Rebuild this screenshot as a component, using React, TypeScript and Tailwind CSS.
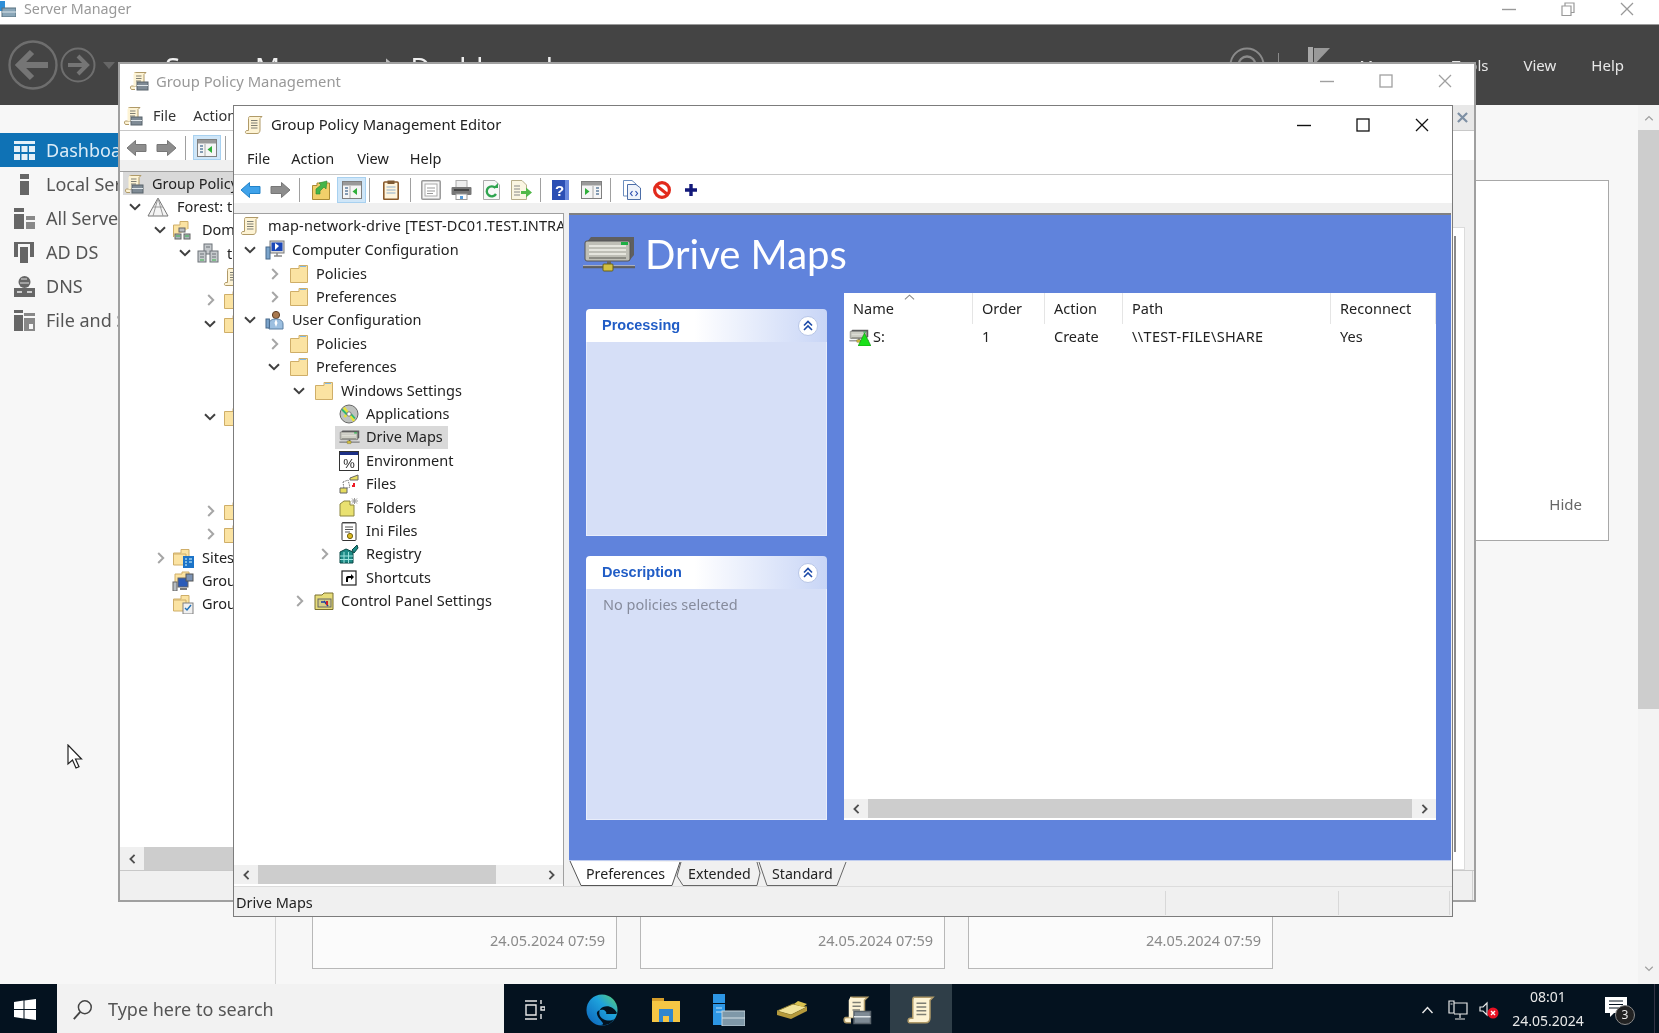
import type { ReactNode } from 'react';

const Chevron = ({ dir }: { dir: 'right' | 'down' }) =>
  dir === 'down' ? (
    <svg viewBox="0 0 12 8" className="h-[8px] w-[12px]"><path d="M1 1.2 6 6.2 11 1.2" fill="none" stroke="#404040" strokeWidth="2" /></svg>
  ) : (
    <svg viewBox="0 0 8 12" className="ml-[2px] h-[12px] w-[8px]"><path d="M1.2 1 6.2 6 1.2 11" fill="none" stroke="#a6a6a6" strokeWidth="2" /></svg>
  );

const Folder = () => (
  <svg viewBox="0 0 20 20" className="h-[20px] w-[20px]">
    <path d="M1.5 4.5H10V1.5H18.5V18.5H1.5Z" fill="#fbe3a2" stroke="#cfae68" />
    <path d="M11 2.5H17" stroke="#7fb8e6" strokeWidth="1" />
  </svg>
);

const Scroll = ({ className = 'h-[20px] w-[20px]' }: { className?: string }) => (
  <svg viewBox="0 0 20 20" className={`shrink-0 ${className}`}>
    <path d="M5.5 1.5H18L16 3.5V15C16 17 15 18.5 13 18.5H2.5C1 18.5 1 15.5 3 15.5H4.5V3.5C4.5 2.5 5 1.5 5.5 1.5Z" fill="#fdf3d4" stroke="#b09a68" />
    <path d="M7 5.5H13.5M7 8H13.5M7 10.5H13.5M7 13H13.5" stroke="#7f7f74" />
  </svg>
);

const ScrollTools = ({ className = 'h-[20px] w-[20px]' }: { className?: string }) => (
  <svg viewBox="0 0 20 20" className={`shrink-0 ${className}`}>
    <path d="M5.5 1.5H17L15 3.5V15H2.5C1 15 1 18.5 3 18.5H6" fill="#fdf3d4" stroke="#b09a68" />
    <path d="M5.5 1.5 4.5 3.5V15H14V3.5Z" fill="#fdf3d4" />
    <path d="M7 5H12.5M7 7.5H12.5M7 10H12" stroke="#7f7f74" />
    <rect x="8" y="11" width="11" height="8" fill="#7f8b95" stroke="#59636b" />
    <path d="M8 14.5H19" stroke="#dfe5e8" />
  </svg>
);

const Drive = ({ className }: { className: string }) => (
  <svg viewBox="0 0 54 36" className={`shrink-0 ${className}`}>
    <path d="M5 6 9 1H52V19L47 25H5Z" fill="#5f5f5f" />
    <rect x="3" y="5" width="45" height="20" rx="2" fill="#bfbfb6" stroke="#555" />
    <path d="M7 10H44M7 14H44M7 18H44" stroke="#f2f2ea" strokeWidth="1.6" />
    <path d="M7 22H44" stroke="#8c8c84" strokeWidth="2" />
    <path d="M39 6H46V9H39Z" fill="#1fae45" />
    <path d="M25 25H29V29H25Z" fill="#666" />
    <path d="M1 31H53" stroke="#5f5f5f" strokeWidth="2.6" />
    <path d="M1 29.6H53" stroke="#c4c4c4" strokeWidth="0.8" />
    <rect x="21" y="28" width="10" height="7" rx="1" fill="#d4c040" stroke="#66601e" />
  </svg>
);

const treeIcons: Record<string, ReactNode> = {
  app: (
    <svg viewBox="0 0 20 20" className="h-[20px] w-[20px]">
      <circle cx="10" cy="10" r="9" fill="#bfc2bf" stroke="#666" />
      <path d="M5 3.5 9 9 5.5 13M11 11 15 17" stroke="#e5e23a" strokeWidth="2.6" fill="none" />
      <path d="M3 5.5 8 10.5M12 10 16 14.5" stroke="#2eb872" strokeWidth="1.8" fill="none" />
      <circle cx="10" cy="10" r="2.2" fill="#fff" stroke="#777" />
    </svg>
  ),
  drive: <Drive className="h-[20px] w-[21px]" />,
  env: (
    <svg viewBox="0 0 20 20" className="h-[20px] w-[20px]">
      <rect x="0.5" y="0.5" width="19" height="19" fill="#fff" stroke="#333" />
      <rect x="1" y="1" width="18" height="3" fill="#1c2f86" />
      <text x="10" y="16.5" textAnchor="middle" fontSize="13" fontFamily="Liberation Sans, sans-serif" fill="#222">%</text>
    </svg>
  ),
  files: (
    <svg viewBox="0 0 20 20" className="h-[20px] w-[20px]">
      <path d="M11 4 19 1V6H11Z" fill="#e9df63" stroke="#666" />
      <path d="M4 8 9 6 11 13 5 15Z" fill="#fff" stroke="#777" strokeDasharray="1.5 1" />
      <path d="M1 14H8V19H1Z" fill="#e6dc5e" stroke="#666" />
      <path d="M14 10 16 10M13 12H16" stroke="#ee1c25" strokeWidth="2" />
    </svg>
  ),
  folders: (
    <svg viewBox="0 0 20 20" className="h-[20px] w-[20px]">
      <path d="M1 19V7L5 4H11V8H15V19Z" fill="#e9e170" stroke="#8c8640" />
      <path d="M15.5 1V7M12.5 4H19M13 1.5 18 6.5M18 1.5 13 6.5" stroke="#999" />
    </svg>
  ),
  ini: (
    <svg viewBox="0 0 20 20" className="h-[20px] w-[20px]">
      <rect x="3" y="1.5" width="14" height="18" rx="1" fill="#fff" stroke="#333" />
      <path d="M4 1V3M6 1V3M8 1V3M10 1V3M12 1V3M14 1V3M16 1V3" stroke="#555" />
      <path d="M6 6H14M6 8.5H14M6 11H11" stroke="#555" />
      <circle cx="11" cy="15" r="2.6" fill="#dbb920" stroke="#776510" />
    </svg>
  ),
  reg: (
    <svg viewBox="0 0 20 20" className="h-[20px] w-[20px]">
      <path d="M1 8 7 5 14 8V19H1Z" fill="#1d8b86" stroke="#084744" />
      <path d="M1 12H14M1 15.5H14M5 8V19M9.5 8V19" stroke="#9be3de" />
      <path d="M13 6 18 1 19 4 15 9Z" fill="#1d8b86" stroke="#084744" />
    </svg>
  ),
  shortcut: (
    <svg viewBox="0 0 20 20" className="h-[20px] w-[20px]">
      <rect x="3" y="3" width="14" height="14" fill="#fff" stroke="#222" strokeWidth="1.2" />
      <path d="M7 14V10C7 8.5 8 8 10 8H12V6L15 9 12 12V10H10C9.4 10 9 10.5 9 11V14Z" fill="#000" />
    </svg>
  ),
  cps: (
    <svg viewBox="0 0 20 20" className="h-[20px] w-[20px]">
      <path d="M1 18.5V4H8L10 2H19V18.5Z" fill="#e6dc7a" stroke="#7a7030" />
      <rect x="4" y="8" width="13" height="8" fill="#d6cf85" stroke="#666" />
      <path d="M7 11H10M10 10 14 15" stroke="#1d3c9f" strokeWidth="1.5" />
      <path d="M13 10V14" stroke="#d0202a" strokeWidth="2" />
    </svg>
  ),
  computer: (
    <svg viewBox="0 0 20 20" className="h-[20px] w-[20px]">
      <rect x="5" y="1" width="14" height="12" fill="#d8d8d8" stroke="#7a7a7a" />
      <path d="M6.5 2.5H17.5V11H6.5Z" fill="#1b47b8" />
      <path d="M10 3 14 6 10 10Z" fill="#fff" />
      <path d="M9 16H17M12 13V16" stroke="#888" strokeWidth="1.5" />
      <rect x="1" y="7" width="4" height="12" fill="#7ca5cc" stroke="#47698b" />
    </svg>
  ),
  user: (
    <svg viewBox="0 0 20 20" className="h-[20px] w-[20px]">
      <circle cx="11" cy="5" r="3.6" fill="#a9794f" stroke="#5e3e25" />
      <path d="M4 19V14C4 10 8 9 11 9S18 10 18 14V19Z" fill="#9cbfe0" stroke="#5b7fa3" />
      <path d="M11 9 9.5 13 11 17 12.5 13Z" fill="#fff" />
      <rect x="1" y="9" width="3.4" height="9" fill="#7ca5cc" stroke="#47698b" />
    </svg>
  ),
  folder: <Folder />,
  scroll: <Scroll />,
};

type Row = { label: string; chev?: 'right' | 'down'; icon: string; indent: string; selected?: boolean };

const editorRows: Row[] = [
  { label: 'Computer Configuration', chev: 'down', icon: 'computer', indent: 'pl-[10px]' },
  { label: 'Policies', chev: 'right', icon: 'folder', indent: 'pl-[34px]' },
  { label: 'Preferences', chev: 'right', icon: 'folder', indent: 'pl-[34px]' },
  { label: 'User Configuration', chev: 'down', icon: 'user', indent: 'pl-[10px]' },
  { label: 'Policies', chev: 'right', icon: 'folder', indent: 'pl-[34px]' },
  { label: 'Preferences', chev: 'down', icon: 'folder', indent: 'pl-[34px]' },
  { label: 'Windows Settings', chev: 'down', icon: 'folder', indent: 'pl-[59px]' },
  { label: 'Applications', icon: 'app', indent: 'pl-[84px]' },
  { label: 'Drive Maps', icon: 'drive', indent: 'pl-[84px]', selected: true },
  { label: 'Environment', icon: 'env', indent: 'pl-[84px]' },
  { label: 'Files', icon: 'files', indent: 'pl-[84px]' },
  { label: 'Folders', icon: 'folders', indent: 'pl-[84px]' },
  { label: 'Ini Files', icon: 'ini', indent: 'pl-[84px]' },
  { label: 'Registry', chev: 'right', icon: 'reg', indent: 'pl-[84px]' },
  { label: 'Shortcuts', icon: 'shortcut', indent: 'pl-[84px]' },
  { label: 'Control Panel Settings', chev: 'right', icon: 'cps', indent: 'pl-[59px]' },
];

const TreeRow = ({ row }: { row: Row }) => (
  <div className={`flex h-[23.4px] shrink-0 items-center whitespace-nowrap ${row.indent}`}>
    <span className="flex w-[12px] shrink-0 justify-center">{row.chev && <Chevron dir={row.chev} />}</span>
    <span className={`ml-[5px] flex h-[23px] items-center pl-[4px] pr-[5px] ${row.selected ? 'bg-[#d9d9d9]' : ''}`}>
      <span className="flex w-[20px] shrink-0 justify-center">{treeIcons[row.icon]}</span>
      <span className="ml-[7px]">{row.label}</span>
    </span>
  </div>
);

const oldRows: Row[] = [
  { label: 'Forest: test.intra', chev: 'down', icon: 'forest', indent: 'pl-[9px]' },
  { label: 'Domains', chev: 'down', icon: 'dom', indent: 'pl-[34px]' },
  { label: 'test.intra', chev: 'down', icon: 'servers', indent: 'pl-[59px]' },
  { label: '', icon: 'scroll', indent: 'pl-[84px]' },
  { label: '', chev: 'right', icon: 'folder', indent: 'pl-[84px]' },
  { label: '', chev: 'down', icon: 'folder', indent: 'pl-[84px]' },
  { label: '', icon: 'none', indent: 'pl-[84px]' },
  { label: '', icon: 'none', indent: 'pl-[84px]' },
  { label: '', icon: 'none', indent: 'pl-[84px]' },
  { label: '', chev: 'down', icon: 'folder', indent: 'pl-[84px]' },
  { label: '', icon: 'none', indent: 'pl-[84px]' },
  { label: '', icon: 'none', indent: 'pl-[84px]' },
  { label: '', icon: 'none', indent: 'pl-[84px]' },
  { label: '', chev: 'right', icon: 'folder', indent: 'pl-[84px]' },
  { label: '', chev: 'right', icon: 'folder', indent: 'pl-[84px]' },
  { label: 'Sites', chev: 'right', icon: 'sites', indent: 'pl-[34px]' },
  { label: 'Group Policy Modeling', icon: 'model', indent: 'pl-[34px]' },
  { label: 'Group Policy Results', icon: 'results', indent: 'pl-[34px]' },
];

const oldIcons: Record<string, ReactNode> = {
  ...treeIcons,
  none: null,
  forest: (
    <svg viewBox="0 0 22 20" className="h-[20px] w-[22px]">
      <path d="M11 1 21 19H1Z" fill="#f4f4f4" stroke="#777" />
      <path d="M6 10H16M11 1 6 19M11 1 16 19" fill="none" stroke="#999" />
    </svg>
  ),
  dom: (
    <svg viewBox="0 0 22 20" className="h-[20px] w-[22px]">
      <path d="M1.5 17V5H8V1.5H16V9" fill="#fbe3a2" stroke="#cfae68" />
      <rect x="7" y="8" width="6" height="4" fill="#b8bcc0" stroke="#666" />
      <rect x="3" y="14" width="6" height="5" fill="#aab4ba" stroke="#666" />
      <rect x="12" y="14" width="6" height="5" fill="#aab4ba" stroke="#666" />
      <path d="M4 16H8M13 16H17" stroke="#39b54a" />
    </svg>
  ),
  servers: (
    <svg viewBox="0 0 22 20" className="h-[20px] w-[22px]">
      <rect x="7" y="1" width="8" height="10" fill="#c5c9cc" stroke="#6c7378" />
      <rect x="1" y="8" width="8" height="11" fill="#c5c9cc" stroke="#6c7378" />
      <rect x="13" y="8" width="8" height="11" fill="#c5c9cc" stroke="#6c7378" />
      <path d="M3 11H7M3 14H7M15 11H19M15 14H19M9 4H13" stroke="#6c7378" />
      <path d="M3 17H7M15 17H19" stroke="#39b54a" />
    </svg>
  ),
  sites: (
    <svg viewBox="0 0 22 20" className="h-[20px] w-[22px]">
      <path d="M1.5 17V5H9V1.5H17V9" fill="#fbe3a2" stroke="#cfae68" />
      <path d="M1.5 17V6H14V17Z" fill="#fbe3a2" stroke="#cfae68" />
      <rect x="11" y="8" width="11" height="12" fill="#1c73c8" />
      <path d="M13 11H15M17 11H20M13 14H15M17 14H20M13 17H15" stroke="#dff" />
    </svg>
  ),
  model: (
    <svg viewBox="0 0 22 20" className="h-[20px] w-[22px]">
      <path d="M3 13V3H10V1H17V6" fill="#fbe3a2" stroke="#cfae68" />
      <rect x="6" y="7" width="10" height="9" fill="#2b5bb8" stroke="#666" />
      <rect x="14" y="3" width="7" height="7" fill="#7c93b4" stroke="#555" />
      <rect x="1" y="11" width="4" height="9" fill="#b7bdc2" stroke="#666" />
      <path d="M8 18H15" stroke="#777" strokeWidth="2" />
    </svg>
  ),
  results: (
    <svg viewBox="0 0 22 20" className="h-[20px] w-[22px]">
      <path d="M1.5 17V5H9V1.5H17V9" fill="#fbe3a2" stroke="#cfae68" />
      <path d="M1.5 17V6H14V17Z" fill="#fbe3a2" stroke="#cfae68" />
      <rect x="11" y="9" width="10" height="11" fill="#f0f0f0" stroke="#808080" />
      <path d="M13 14 15 16 19 11" fill="none" stroke="#1d6fb8" strokeWidth="1.4" />
    </svg>
  ),
};

const OldTreeRow = ({ row }: { row: Row }) => (
  <div className={`flex h-[23.4px] shrink-0 items-center whitespace-nowrap ${row.indent}`}>
    <span className="flex w-[12px] shrink-0 justify-center">{row.chev && <Chevron dir={row.chev} />}</span>
    <span className="ml-[6px] flex w-[22px] shrink-0 justify-center">{oldIcons[row.icon]}</span>
    <span className="ml-[8px]">{row.label}</span>
  </div>
);

const Sep = ({ className }: { className: string }) => <span className={`h-[24px] w-px shrink-0 bg-[#a0a0a0] ${className}`} />;

const ArrowL = ({ color, edge, className }: { color: string; edge: string; className: string }) => (
  <svg viewBox="0 0 21 18" className={`h-[18px] w-[21px] shrink-0 ${className}`}>
    <path d="M1 9 9.5 1.5V5.5H20V12.5H9.5V16.5Z" fill={color} stroke={edge} strokeLinejoin="round" />
  </svg>
);

const ArrowR = ({ color, edge, className }: { color: string; edge: string; className: string }) => (
  <svg viewBox="0 0 21 18" className={`h-[18px] w-[21px] shrink-0 ${className}`}>
    <path d="M20 9 11.5 1.5V5.5H1V12.5H11.5V16.5Z" fill={color} stroke={edge} strokeLinejoin="round" />
  </svg>
);

const PaneIcon = () => (
  <svg viewBox="0 0 20 18" className="h-[18px] w-[20px]">
    <rect x="0.5" y="0.5" width="19" height="17" fill="#f5f5f5" stroke="#7f7f7f" />
    <rect x="1" y="1" width="18" height="3.5" fill="#9a9a9a" />
    <path d="M3 7H6M3 10H6M3 13H6" stroke="#5f7f9f" strokeWidth="1.5" />
    <path d="M8 5V17" stroke="#aaa" />
    <path d="M15 7V14L10.5 10.5Z" fill="#2fae3a" />
  </svg>
);

const ScrollBar = ({ thumb, className }: { thumb: string; className: string }) => (
  <div className={`flex shrink-0 items-center bg-[#f0f0f0] ${className}`}>
    <span className="flex w-[24px] shrink-0 justify-center">
      <svg viewBox="0 0 8 12" className="h-[10px] w-[7px]"><path d="M6.5 1 1.5 6 6.5 11" fill="none" stroke="#505050" strokeWidth="2.2" /></svg>
    </span>
    <span className={`h-full bg-[#cdcdcd] ${thumb}`} />
    <span className="ml-auto flex w-[24px] shrink-0 justify-center">
      <svg viewBox="0 0 8 12" className="h-[10px] w-[7px]"><path d="M1.5 1 6.5 6 1.5 11" fill="none" stroke="#505050" strokeWidth="2.2" /></svg>
    </span>
  </div>
);

const WinControls = ({ color, restore }: { color: string; restore?: boolean }) => (
  <>
    <svg viewBox="0 0 14 14" className="h-[14px] w-[14px]"><path d="M0 7.5H14" stroke={color} strokeWidth="1.4" /></svg>
    <svg viewBox="0 0 14 14" className="ml-[45px] h-[14px] w-[14px]">
      {restore ? (
        <path d="M1 4H10V13.5H1ZM4 4V1H13V10.5H10" fill="none" stroke={color} strokeWidth="1.2" />
      ) : (
        <rect x="1" y="1" width="12" height="12" fill="none" stroke={color} strokeWidth="1.3" />
      )}
    </svg>
    <svg viewBox="0 0 14 14" className="ml-[45px] h-[14px] w-[14px]"><path d="M1 1 13 13M13 1 1 13" stroke={color} strokeWidth="1.3" /></svg>
  </>
);

const DateCard = () => (
  <div className="flex w-[305px] items-end justify-end border-x border-b border-[#b8b8b8] bg-[#fbfbfb] pb-[16px] pr-[11px] text-[14.5px] text-[#8a8a8a]">
    24.05.2024 07:59
  </div>
);

const side: { label: string; icon: ReactNode; active?: boolean }[] = [
  {
    label: 'Dashboard',
    active: true,
    icon: (
      <svg viewBox="0 0 21 19" className="h-[19px] w-[21px]" fill="#e4f0f8">
        <rect width="21" height="3" /><rect y="5" width="6" height="6" /><rect x="7.5" y="5" width="6" height="6" /><rect x="15" y="5" width="6" height="6" /><rect y="13" width="6" height="6" /><rect x="7.5" y="13" width="6" height="6" /><rect x="15" y="13" width="6" height="6" />
      </svg>
    ),
  },
  {
    label: 'Local Server',
    icon: <svg viewBox="0 0 21 21" className="h-[21px] w-[21px]"><rect x="6" y="0" width="9" height="5" fill="#666" /><rect x="6" y="7" width="9" height="14" fill="#666" /></svg>,
  },
  {
    label: 'All Servers',
    icon: <svg viewBox="0 0 21 21" className="h-[21px] w-[21px]"><rect x="0" y="0" width="10" height="4" fill="#666" /><rect x="0" y="6" width="10" height="15" fill="#666" /><rect x="12" y="8" width="9" height="4" fill="#888" /><rect x="12" y="14" width="9" height="7" fill="#888" /></svg>,
  },
  {
    label: 'AD DS',
    icon: <svg viewBox="0 0 21 21" className="h-[21px] w-[21px]" fill="#666"><rect x="0" y="1" width="4" height="14" /><rect x="0" y="0" width="20" height="2" /><rect x="16" y="1" width="4" height="14" /><rect x="6" y="5" width="8" height="16" /></svg>,
  },
  {
    label: 'DNS',
    icon: <svg viewBox="0 0 21 21" className="h-[21px] w-[21px]"><circle cx="10.5" cy="6" r="6" fill="#666" /><path d="M7 3H13M6 7H15" stroke="#ddd" /><rect x="0" y="12" width="21" height="9" fill="#666" /><path d="M3 16H8M13 16H18" stroke="#eee" strokeWidth="1.5" /></svg>,
  },
  {
    label: 'File and Storage Services',
    icon: <svg viewBox="0 0 21 21" className="h-[21px] w-[21px]"><rect x="0" y="0" width="9" height="3" fill="#666" /><rect x="0" y="5" width="9" height="16" fill="#666" /><rect x="10" y="3" width="11" height="3" fill="#888" /><path d="M10 8H21V21H10Z" fill="#888" /><path d="M15 14H19V19H15Z" fill="#f7f7f7" /></svg>,
  },
];

const menuFont = "font-['Noto_Sans',sans-serif]";

export default function App() {
  return (
    <div className={`relative flex h-[1033px] w-[1659px] flex-col overflow-hidden bg-[#f7f7f7] text-[14.5px] text-[#222] blur-[0.4px] ${menuFont}`}>
      {/* server manager behind everything */}
      <div className="flex h-[25px] shrink-0 items-center border-b border-[#9a9a9a] bg-white pb-[6px] text-[#999]">
        <svg viewBox="0 0 16 16" className="h-[16px] w-[16px]">
          <rect x="0" y="0" width="5" height="10" fill="#2f8fd8" />
          <rect x="2" y="7" width="14" height="9" fill="#8aa6b8" stroke="#56707f" />
          <path d="M2 11H16" stroke="#dbe6ec" />
        </svg>
        <span className="ml-[8px] text-[14.3px]">Server Manager</span>
        <span className="ml-auto mr-[25px] flex items-center"><WinControls color="#999" restore /></span>
      </div>
      <div className="flex h-[80px] shrink-0 items-center bg-[#444] pl-[8px] pr-[35px] text-[#e8e8e8]">
        <svg viewBox="0 0 50 50" className="h-[50px] w-[50px]">
          <circle cx="25" cy="25" r="23.5" fill="none" stroke="#6e6e6e" strokeWidth="2.4" />
          <path d="M11 25H40M24 12 11 25 24 38" fill="none" stroke="#757575" strokeWidth="6" />
        </svg>
        <svg viewBox="0 0 36 36" className="ml-[2px] h-[36px] w-[36px]">
          <circle cx="18" cy="18" r="16.5" fill="none" stroke="#6e6e6e" strokeWidth="2" />
          <path d="M8 18H27M18 9 27 18 18 27" fill="none" stroke="#757575" strokeWidth="4" />
        </svg>
        <span className="ml-[7px] h-0 w-0 border-x-[6px] border-t-[7px] border-x-transparent border-t-[#666]" />
        <span className="ml-[50px] mt-[6px] whitespace-nowrap text-[27.5px] text-[#f0f0f0]">Server Manager</span>
        <span className="ml-[14px] mt-[-4px] h-[10px] w-[6px] bg-[#bbb] [clip-path:polygon(0_0,100%_50%,0_100%)]" />
        <span className="ml-[19px] mt-[6px] whitespace-nowrap text-[27.5px] text-[#f0f0f0]">Dashboard</span>
        <span className="ml-auto flex items-center gap-[35px] text-[15px]">
          <svg viewBox="0 0 36 36" className="h-[36px] w-[36px]">
            <circle cx="18" cy="18" r="16.5" fill="none" stroke="#8a8a8a" strokeWidth="2" />
            <circle cx="18" cy="18" r="8.5" fill="none" stroke="#8a8a8a" strokeWidth="2.4" />
          </svg>
          <span className="-ml-[22px] h-[24px] w-px bg-[#8a8a8a]" />
          <svg viewBox="0 0 22 36" className="-ml-[6px] -mr-[5px] h-[36px] w-[22px]">
            <rect x="0" y="0" width="5" height="36" fill="#a8a8a8" />
            <path d="M6 1H22L6 18Z" fill="#999" />
          </svg>
          <span>Manage</span>
          <span>Tools</span>
          <span>View</span>
          <span>Help</span>
        </span>
      </div>

      <div className="flex min-h-0 flex-1">
        <div className="w-[276px] shrink-0 border-r border-[#d4d4d4] pt-[28px] text-[18px] text-[#555]">
          {side.map((s) => (
            <div key={s.label} className={`flex h-[34px] items-center whitespace-nowrap pl-[14px] ${s.active ? 'bg-[#0f72b5] text-[#dcecf7]' : ''}`}>
              <span className="w-[32px] shrink-0">{s.icon}</span>
              {s.label}
            </div>
          ))}
        </div>
        <div className="flex min-w-0 flex-1 flex-col pb-[15px] pl-[36px] pr-[29px] pt-[75px]">
          <div className="flex h-[361px] items-end justify-end border border-[#a8a8a8] bg-white pb-[25px] pr-[26px] text-[15px] text-[#666]">Hide</div>
          <div className="mt-auto flex h-[120px] gap-[23px]">
            <DateCard />
            <DateCard />
            <DateCard />
          </div>
        </div>
        <div className="flex w-[21px] shrink-0 flex-col items-center bg-[#f3f3f3]">
          <span className="flex h-[25px] items-center">
            <svg viewBox="0 0 12 8" className="h-[6px] w-[10px]"><path d="M1 7 6 2 11 7" fill="none" stroke="#a0a0a0" strokeWidth="1.6" /></svg>
          </span>
          <span className="h-[579px] w-full bg-[#cdcdcd]" />
          <span className="mt-auto flex h-[22px] items-center pb-[8px]">
            <svg viewBox="0 0 12 8" className="h-[6px] w-[10px]"><path d="M1 1 6 6 11 1" fill="none" stroke="#a0a0a0" strokeWidth="1.6" /></svg>
          </span>
        </div>
      </div>

      {/* taskbar */}
      <div className="flex h-[49px] shrink-0 items-center bg-[#04121f] text-[#e8e8e8] [&>svg]:mt-[2px]">
        <div className="flex h-full w-[57px] shrink-0 items-center pl-[14px] pt-[2px]">
          <svg viewBox="0 0 22 21" className="h-[21px] w-[22px]" fill="#fff">
            <path d="M0 3 9.5 1.6V10H0ZM10.5 1.5 22 0V10H10.5ZM0 11H9.5V19.4L0 18ZM10.5 11H22V21L10.5 19.5Z" />
          </svg>
        </div>
        <div className="flex h-full w-[447px] shrink-0 items-center bg-[#f2f2f2] pl-[15px] pt-[2px] text-[18px] text-[#555]">
          <svg viewBox="0 0 24 24" className="h-[22px] w-[22px]"><circle cx="14" cy="9" r="7" fill="none" stroke="#444" strokeWidth="1.6" /><path d="M9 14 2 22" stroke="#444" strokeWidth="2" /></svg>
          <span className="ml-[14px]">Type here to search</span>
        </div>
        <svg viewBox="0 0 21 22" className="ml-[20px] h-[22px] w-[21px]" fill="none" stroke="#e8e8e8" strokeWidth="1.4">
          <path d="M1 2H13M1 20H13M2 6H12V16H2ZM17 1V5M17 8H21V11H17ZM17 15V20" />
        </svg>
        <svg viewBox="0 0 32 32" className="ml-[41px] h-[32px] w-[32px]">
          <defs>
            <linearGradient id="edge" x1="0" y1="1" x2="1" y2="0"><stop offset="0" stopColor="#0b60b8" /><stop offset="0.6" stopColor="#1ea2dc" /><stop offset="1" stopColor="#5fd06a" /></linearGradient>
          </defs>
          <circle cx="16" cy="16" r="15.5" fill="url(#edge)" />
          <path d="M31 19C28 13 22 11 17 13 12 15 12 22 17 25 21 27 25 27 28 25 25 30 20 32 15 31 21 30 12 26 11 20 10 17 14 15 18 16 20 17 21 19 20 20H30Z" fill="#04121f" />
        </svg>
        <svg viewBox="0 0 28 24" className="ml-[34px] h-[24px] w-[28px]">
          <rect y="0" width="12" height="4" fill="#d59d2a" />
          <rect y="3" width="28" height="21" fill="#f5c644" />
          <rect x="7" y="11" width="14" height="13" fill="#2f86d0" />
          <rect x="11" y="18" width="6" height="6" fill="#f5c644" />
        </svg>
        <svg viewBox="0 0 32 32" className="ml-[33px] h-[32px] w-[32px]">
          <rect x="0" y="0" width="12" height="9" fill="#2d96e4" />
          <rect x="0" y="10" width="12" height="21" fill="#2d96e4" />
          <path d="M3 14H9M3 18H9" stroke="#bfe1fa" />
          <rect x="9" y="17" width="23" height="15" fill="#7f98a8" stroke="#c4d2da" />
          <path d="M9 24H32" stroke="#d5e0e6" />
        </svg>
        <svg viewBox="0 0 32 20" className="ml-[31px] h-[20px] w-[32px]">
          <path d="M1 11 17 4 31 7 15 15Z" fill="#f1e39a" stroke="#8a7a30" />
          <path d="M1 11V15L15 19 31 11V7L15 15Z" fill="#b69a3c" />
          <path d="M22 1 31 4 27 7 18 4Z" fill="#d9c14f" />
        </svg>
        <ScrollTools className="ml-[34px] mt-[2px] h-[30px] w-[30px]" />
        <div className="ml-[18px] flex h-full w-[62px] shrink-0 items-center justify-center bg-[#2f3e48] pt-[2px]">
          <Scroll className="h-[30px] w-[30px]" />
        </div>
        <svg viewBox="0 0 12 8" className="ml-[469px] h-[8px] w-[13px]"><path d="M1 7 6 1.5 11 7" fill="none" stroke="#e8e8e8" strokeWidth="1.4" /></svg>
        <svg viewBox="0 0 20 20" className="ml-[14px] h-[20px] w-[20px]" fill="none" stroke="#e8e8e8" strokeWidth="1.2">
          <path d="M1 1H6V13H1ZM6 3H19V14H6M12 14V18M7 19H17M2.5 4H4.5" />
        </svg>
        <svg viewBox="0 0 20 20" className="ml-[11px] h-[20px] w-[20px]">
          <path d="M1 7H4L8 3V15L4 11H1Z" fill="none" stroke="#e8e8e8" strokeWidth="1.2" />
          <circle cx="14" cy="13" r="5.5" fill="#e81123" />
          <path d="M12 11 16 15M16 11 12 15" stroke="#fff" strokeWidth="1.4" />
        </svg>
        <div className="ml-[14px] flex w-[70px] shrink-0 flex-col items-center gap-[4px] text-[14px] leading-[20px]">
          <span>08:01</span>
          <span>24.05.2024</span>
        </div>
        <div className="relative ml-[22px] mt-[2px] h-[30px] w-[30px] shrink-0">
          <svg viewBox="0 0 22 22" className="h-[26px] w-[22px]" fill="#fff">
            <path d="M0 0H22V16H9L5 20V16H0Z" />
            <path d="M4 4H18M4 7.5H18M4 11H18" stroke="#04121f" />
          </svg>
          <span className="absolute bottom-0 right-0 flex h-[20px] w-[20px] items-center justify-center rounded-full border border-[#888] bg-[#222] text-[12px]">3</span>
        </div>
        <span className="ml-auto mr-[4px] h-full w-px bg-[#334]" />
      </div>

      {/* mouse cursor */}
      <svg viewBox="0 0 16 26" className="absolute left-[67px] top-[744px] h-[26px] w-[16px]">
        <path d="M1 1V20L5.5 16 9 24 12 22.7 8.5 15H14.5Z" fill="#fff" stroke="#222" strokeWidth="1.2" />
      </svg>

      {/* group policy management */}
      <div className="absolute left-[118px] top-[62px] flex h-[840px] w-[1358px] flex-col border-2 border-[#a0a0a0] bg-white">
        <div className="flex h-[41px] shrink-0 items-center pb-[7px] pl-[9px] pr-[22px] text-[#999]">
          <ScrollTools />
          <span className="ml-[7px] text-[14.8px]">Group Policy Management</span>
          <span className="ml-auto flex items-center"><WinControls color="#a0a0a0" /></span>
        </div>
        <div className="flex h-[25px] shrink-0 items-center pl-[3px] text-[#333]">
          <span className="flex h-full items-center pb-[4px]"><ScrollTools /></span>
          <span className="ml-[10px] pb-[4px]">File</span>
          <span className="ml-[17px] pb-[4px]">Action</span>
          <span className="ml-auto flex h-full w-[24px] items-center justify-center bg-[#e8e8e8]">
            <svg viewBox="0 0 12 12" className="h-[11px] w-[11px]"><path d="M1 1 11 11M11 1 1 11" stroke="#7d8fa3" strokeWidth="2.4" /></svg>
          </span>
        </div>
        <div className="flex h-[30px] shrink-0 items-center border-t border-[#c8c8c8] pl-[6px] pt-[4px]">
          <ArrowL color="#8d8d8d" edge="#777" className="" />
          <ArrowR color="#8d8d8d" edge="#777" className="ml-[9px]" />
          <Sep className="ml-[8px]" />
          <span className="ml-[7px] flex h-[25px] w-[28px] items-center justify-center border border-[#a8d1f0] bg-[#cfe6f8]"><PaneIcon /></span>
          <Sep className="ml-[4px]" />
        </div>
        <div className="h-[11px] shrink-0 bg-[#f0f0f0]" />
        <div className="flex min-h-0 flex-1 bg-[#f0f0f0]">
          <div className="flex w-[800px] shrink-0 flex-col border-t border-[#a0a0a0] bg-white">
            <div className="ml-[3px] flex h-[23px] shrink-0 items-center bg-[#d9d9d9] pl-[1px]">
              <ScrollTools />
              <span className="ml-[8px]">Group Policy Management</span>
            </div>
            {oldRows.map((r, i) => <OldTreeRow key={i} row={r} />)}
            <ScrollBar thumb="ml-0 w-[300px]" className="mt-auto h-[23px] w-full" />
          </div>
          <div className="flex min-w-0 flex-1 justify-end pt-[56px] pr-[9px]">
            <div className="flex w-[200px] justify-end border border-[#dcdcdc] bg-white pb-[17px] pr-[8px] pt-[8px]">
              <div className="w-[100px] border-x-2 border-double border-[#8a8a8a]" />
            </div>
          </div>
        </div>
        <div className="flex h-[30px] shrink-0 justify-end border-t border-[#c8c8c8] bg-[#f0f0f0] pr-[1px]">
          <span className="h-full w-px bg-[#d0d0d0]" />
        </div>
      </div>

      {/* group policy management editor */}
      <div className="absolute left-[233px] top-[105px] flex h-[812px] w-[1220px] flex-col border border-[#7c7c7c] bg-white">
        <div className="flex h-[39px] shrink-0 items-center pb-[2px] pl-[10px] pr-[23px]">
          <Scroll />
          <span className="ml-[7px] text-[14.8px]">Group Policy Management Editor</span>
          <span className="ml-auto flex items-center"><WinControls color="#111" /></span>
        </div>
        <div className="flex h-[29px] shrink-0 items-center pb-[2px] pl-[13px]">
          <span>File</span>
          <span className="ml-[21px]">Action</span>
          <span className="ml-[23px]">View</span>
          <span className="ml-[21px]">Help</span>
        </div>
        <div className="flex h-[29px] shrink-0 items-center border-t border-[#c8c8c8] pl-[6px] pt-[2px]">
          <ArrowL color="#3fa2ea" edge="#2283c9" className="" />
          <ArrowR color="#8d8d8d" edge="#777" className="ml-[9px]" />
          <Sep className="ml-[8px]" />
          <svg viewBox="0 0 18 20" className="ml-[12px] h-[20px] w-[18px] shrink-0">
            <path d="M0.5 19.5V5.5H5V3H17.5V19.5Z" fill="#f1cf6a" stroke="#a98a36" />
            <path d="M4 14 4 9 9 5 7 3 15 1 14 9 12 7 8 11 8 14Z" fill="#45b54a" stroke="#2a8a2f" strokeWidth="0.6" />
          </svg>
          <span className="ml-[7px] flex h-[26px] w-[29px] shrink-0 items-center justify-center border border-[#a8d1f0] bg-[#cfe6f8]"><PaneIcon /></span>
          <Sep className="ml-[3px]" />
          <svg viewBox="0 0 16 20" className="ml-[13px] h-[20px] w-[16px] shrink-0">
            <rect x="0.8" y="2" width="14.4" height="17.4" rx="1" fill="#fff4dc" stroke="#8a5a2b" strokeWidth="1.6" />
            <rect x="4.5" y="0.5" width="7" height="3.5" fill="#7f5a33" />
            <path d="M3.5 7H12.5M3.5 10H12.5M3.5 13H12.5" stroke="#8daecc" />
          </svg>
          <Sep className="ml-[11px]" />
          <svg viewBox="0 0 20 20" className="ml-[10px] h-[20px] w-[20px] shrink-0">
            <rect x="0.8" y="0.8" width="18.4" height="18.4" rx="1" fill="#f6f6f6" stroke="#999" strokeWidth="1.5" />
            <rect x="4" y="4" width="12" height="12" fill="#fff" stroke="#aaa" />
            <path d="M6 8H14M6 11H14M6 13.5H12" stroke="#999" />
          </svg>
          <svg viewBox="0 0 21 20" className="ml-[10px] h-[20px] w-[21px] shrink-0">
            <rect x="5" y="0.5" width="11" height="8" fill="#eee" stroke="#aaa" />
            <rect x="0.5" y="7" width="20" height="8" rx="1" fill="#777" />
            <path d="M3 10H18" stroke="#333" strokeWidth="1.5" />
            <rect x="5" y="14" width="11" height="5.5" fill="#fff" stroke="#999" />
            <path d="M9 16H12V19H9Z" fill="#5b9fdc" />
          </svg>
          <svg viewBox="0 0 17 20" className="ml-[11px] h-[20px] w-[17px] shrink-0">
            <path d="M0.5 0.5H12L16.5 5V19.5H0.5Z" fill="#f8f8f8" stroke="#aaa" />
            <path d="M12.5 8A5 5 0 1 0 13 14" fill="none" stroke="#2ea44f" strokeWidth="2.4" />
            <path d="M10 8H15V3Z" fill="#2ea44f" />
          </svg>
          <svg viewBox="0 0 21 20" className="ml-[11px] h-[20px] w-[21px] shrink-0">
            <path d="M0.5 0.5H11L15.5 5V19.5H0.5Z" fill="#fbf6e2" stroke="#b7ad8a" />
            <path d="M3 6H9M3 9H9M3 12H9M3 15H9" stroke="#888" />
            <path d="M10 11H15V7.5L21 12.5 15 17.5V14H10Z" fill="#52b848" />
          </svg>
          <Sep className="ml-[8px]" />
          <svg viewBox="0 0 17 20" className="ml-[11px] h-[20px] w-[17px] shrink-0">
            <rect width="17" height="20" fill="#2b4fb4" />
            <rect x="13" width="4" height="20" fill="#6a8ade" />
            <text x="7.5" y="16" textAnchor="middle" fontSize="15" fontWeight="bold" fontFamily="Liberation Sans, sans-serif" fill="#fff">?</text>
          </svg>
          <svg viewBox="0 0 21 18" className="ml-[12px] h-[18px] w-[21px] shrink-0">
            <rect x="0.5" y="0.5" width="20" height="17" fill="#f5f5f5" stroke="#7f7f7f" />
            <rect x="1" y="1" width="19" height="3.5" fill="#9a9a9a" />
            <path d="M4 7V14L8.5 10.5Z" fill="#2fae3a" />
            <path d="M12 5V17" stroke="#aaa" />
            <path d="M15 7H18M15 10H18M15 13H18" stroke="#5f7f9f" strokeWidth="1.5" />
          </svg>
          <Sep className="ml-[8px]" />
          <svg viewBox="0 0 18 20" className="ml-[12px] h-[20px] w-[18px] shrink-0">
            <path d="M0.5 0.5H9L13 4V16H0.5Z" fill="#fff" stroke="#6c8ebf" />
            <path d="M4.5 4.5H13L17.5 8V19.5H4.5Z" fill="#eef3fb" stroke="#4c6ea8" />
            <path d="M9.5 11 7.5 13.5 9.5 16M12.5 11 14.5 13.5 12.5 16" fill="none" stroke="#2e50b0" strokeWidth="1.2" />
          </svg>
          <svg viewBox="0 0 18 18" className="ml-[12px] h-[18px] w-[18px] shrink-0">
            <circle cx="9" cy="9" r="7.4" fill="#fff" stroke="#e22a1c" strokeWidth="3.2" />
            <path d="M4 5 14 13" stroke="#e22a1c" strokeWidth="3" />
          </svg>
          <svg viewBox="0 0 12 12" className="ml-[14px] h-[12px] w-[12px] shrink-0">
            <path d="M4.3 0H7.7V4.3H12V7.7H7.7V12H4.3V7.7H0V4.3H4.3Z" fill="#12187a" />
          </svg>
        </div>
        <div className="h-[10px] shrink-0 bg-[#f0f0f0]" />
        <div className="flex min-h-0 flex-1 bg-[#f0f0f0]">
          <div className="flex w-[330px] shrink-0 flex-col border-r border-t border-[#a0a0a0] bg-white">
            <div className="flex h-[24.5px] shrink-0 items-center overflow-hidden whitespace-nowrap pl-[6px]">
              <Scroll />
              <span className="ml-[8px] tracking-[0.15px]">map-network-drive [TEST-DC01.TEST.INTRA]</span>
            </div>
            {editorRows.map((r, i) => <TreeRow key={i} row={r} />)}
            <ScrollBar thumb="w-[238px]" className="mt-auto mb-[2px] h-[19px] w-full" />
          </div>
          <div className="ml-[5px] flex min-w-0 flex-1 flex-col pr-[1px]">
            <div className="flex h-[648px] shrink-0 flex-col border-b border-t-2 border-b-[#c0cdf0] border-t-[#808080] bg-[#6083dc]">
              <div className="flex h-[78px] shrink-0 items-center pl-[13px]">
                <Drive className="h-[36px] w-[54px]" />
                <span className="ml-[9px] whitespace-nowrap font-['Lato',sans-serif] text-[40px] leading-none text-white">Drive Maps</span>
              </div>
              <div className="ml-[17px] flex h-[527px] gap-[17px]">
                <div className="flex w-[241px] shrink-0 flex-col gap-[20px] pt-[16px]">
                  {[
                    { title: 'Processing', h: 'h-[227px]', body: '' },
                    { title: 'Description', h: 'h-[264px]', body: 'No policies selected' },
                  ].map((p) => (
                    <div key={p.title} className={`flex flex-col ${p.h}`}>
                      <div className="flex h-[33px] shrink-0 items-center rounded-t-[4px] bg-gradient-to-r from-white from-45% to-[#c8d5f6] pl-[16px] pr-[9px] pt-[1px] font-['Liberation_Sans',sans-serif] text-[14.5px] font-bold text-[#215dc6]">
                        {p.title}
                        <svg viewBox="0 0 20 20" className="ml-auto h-[20px] w-[20px]">
                          <circle cx="10" cy="10" r="9.5" fill="#fff" stroke="#b8c6e6" />
                          <path d="M6 9.5 10 5.5 14 9.5M6 14 10 10 14 14" fill="none" stroke="#1c4aa8" strokeWidth="1.6" />
                        </svg>
                      </div>
                      <div className="flex-1 border-x border-b border-[#e8edfb] bg-[#d6dff7] pl-[16px] pt-[5px] text-[#868b9c]">{p.body}</div>
                    </div>
                  ))}
                </div>
                <div className="relative flex w-[592px] shrink-0 flex-col bg-white">
                  <div className="grid h-[31px] shrink-0 grid-cols-[129px_72px_78px_208px_105px] items-center">
                    {['Name', 'Order', 'Action', 'Path', 'Reconnect'].map((c) => (
                      <div key={c} className="flex h-full items-center border-r border-[#e5e5e5] pl-[9px]">{c}</div>
                    ))}
                  </div>
                  <svg viewBox="0 0 12 6" className="absolute left-[60px] top-[1px] h-[6px] w-[11px]"><path d="M1 5.5 6 1 11 5.5" fill="none" stroke="#888" strokeWidth="1.2" /></svg>
                  <div className="grid h-[26px] shrink-0 grid-cols-[129px_72px_78px_208px_105px] items-center">
                    <div className="flex items-center pl-[5px]">
                      <span className="relative h-[18px] w-[22px]">
                        <Drive className="absolute left-0 top-0 h-[16px] w-[20px]" />
                        <svg viewBox="0 0 12 12" className="absolute bottom-0 right-0 h-[13px] w-[13px]"><path d="M6 0 12 12H0Z" fill="#19e019" stroke="#0b7a0b" strokeWidth="0.5" /></svg>
                      </span>
                      <span className="ml-[2px]">S:</span>
                    </div>
                    <div className="pl-[9px]">1</div>
                    <div className="pl-[9px]">Create</div>
                    <div className="pl-[9px] tracking-[0.35px]">\\TEST-FILE\SHARE</div>
                    <div className="pl-[9px]">Yes</div>
                  </div>
                  <ScrollBar thumb="w-[547px]" className="mt-auto mb-[2px] h-[19px]" />
                </div>
              </div>
            </div>
            <div className="relative flex h-[25px] shrink-0 items-center pl-[17px] pt-[1px] text-[14.2px]">
              <svg viewBox="0 0 280 25" className="absolute left-0 top-0 h-[25px] w-[280px]">
                <path d="M1 0 12 24.5H103L111 1" fill="#fff" stroke="#555" />
                <path d="M112 1 108 15 114 24.5H188L191 12 188 1" fill="#f0f0f0" stroke="#666" />
                <path d="M190 1 198 24.5H268L277 1" fill="#f0f0f0" stroke="#666" />
              </svg>
              <span className="relative w-[102px] shrink-0">Preferences</span>
              <span className="relative w-[84px] shrink-0">Extended</span>
              <span className="relative">Standard</span>
            </div>
          </div>
        </div>
        <div className="flex h-[30px] shrink-0 items-center border-t border-[#dcdcdc] bg-[#f0f0f0] pl-[2px] pt-[3px]">
          <span className="w-[929px] shrink-0">Drive Maps</span>
          <span className="h-[24px] w-px bg-[#d8d8d8]" />
          <span className="ml-[172px] h-[24px] w-px bg-[#d8d8d8]" />
          <span className="ml-[110px] h-[24px] w-px bg-[#d8d8d8]" />
        </div>
      </div>
    </div>
  );
}
